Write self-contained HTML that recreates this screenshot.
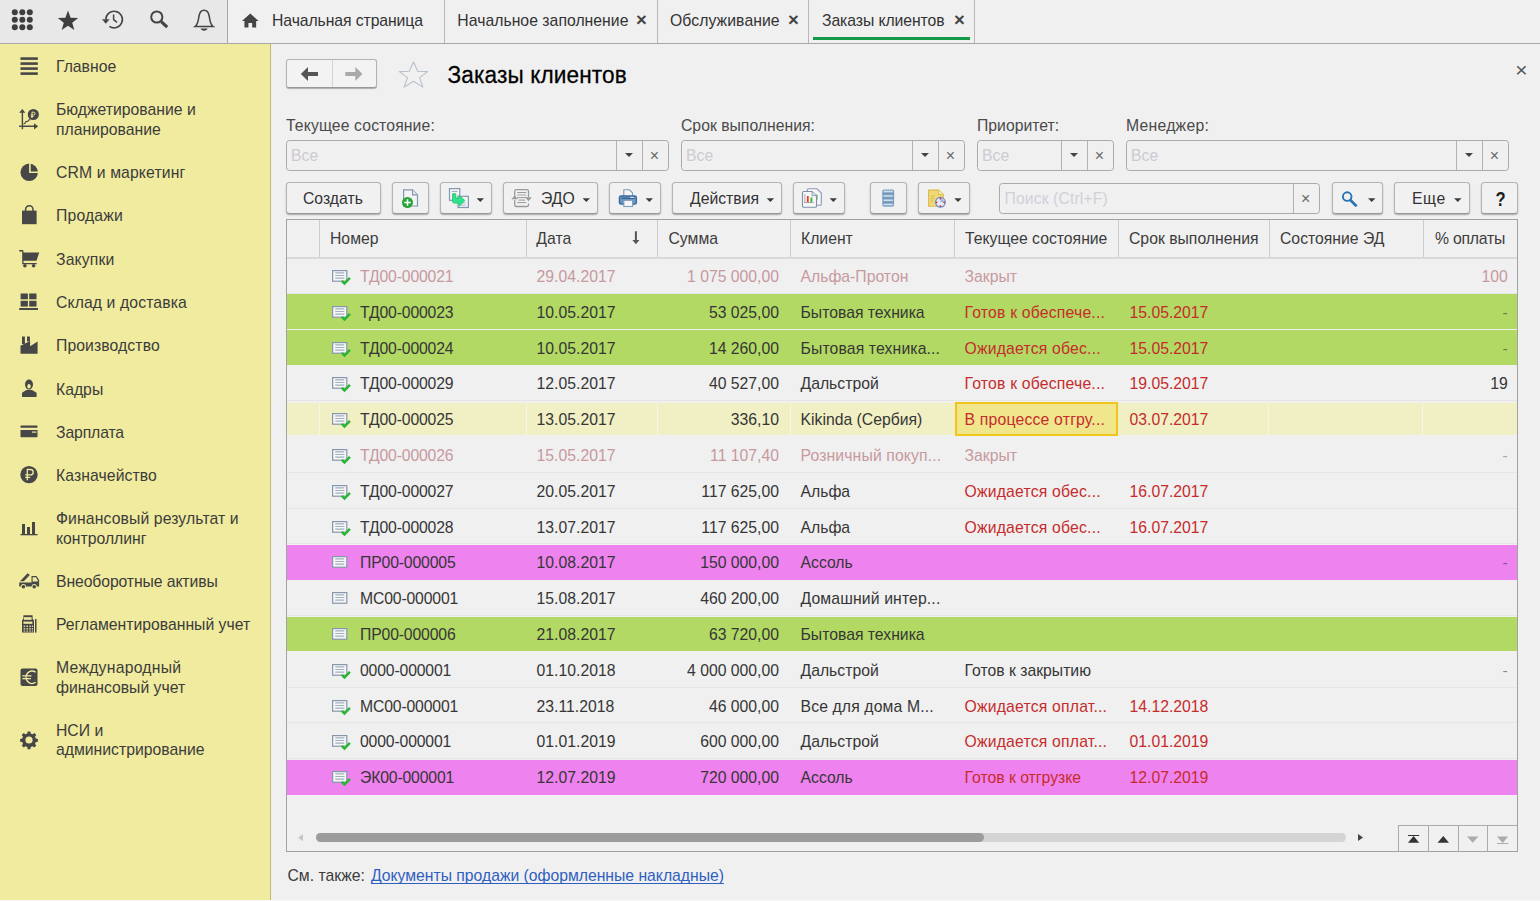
<!DOCTYPE html>
<html lang="ru"><head><meta charset="utf-8"><title>Заказы клиентов</title>
<style>
*{box-sizing:border-box;margin:0;padding:0}
html,body{width:1540px;height:901px;overflow:hidden;background:#f0f0f0}
body{font-family:"Liberation Sans",sans-serif;font-size:15.75px;color:#333;position:relative}
.abs{position:absolute}
svg{position:absolute;overflow:visible}
#top{position:absolute;left:0;top:0;width:1540px;height:44px;background:#f0f0f0;border-bottom:1px solid #a8a8a8}
#tools{position:absolute;left:0;top:0;width:228px;height:43px;background:#e8e8e8;border-right:1px solid #a6a6a6}
.tab{position:absolute;top:0;height:43px;border-right:1px solid #b8b8b8;line-height:41px;white-space:nowrap;color:#333}
.tab span{position:absolute;top:0;letter-spacing:-.08px}
.tab .x{font-size:18.500px;font-weight:bold;color:#444;line-height:39px;letter-spacing:0}
#side{position:absolute;left:0;top:44px;width:271px;height:856px;background:#f0eb9e;border-right:1px solid #c2b970}
#side svg{left:0;top:0}
.si{position:absolute;left:56px;line-height:20px;color:#3c3c3c;white-space:nowrap}
#bottom{position:absolute;left:0;top:900px;width:1540px;height:1px;background:rgba(255,255,255,.55);z-index:9}
.lbl{position:absolute;top:116px;line-height:20px;color:#4a4a4a;white-space:nowrap}
.inp{position:absolute;top:140px;height:31px;border:1px solid #aaa;border-radius:3.500px;background:#f0f0f0;color:#cdcad2;line-height:29px;padding-left:4px;white-space:nowrap}
.inp i{position:absolute;top:0;bottom:0;width:1px;background:#b2b2b2}
.inp u{position:absolute;top:0;text-decoration:none;color:#6a6a6a;font-size:16px;line-height:30px}
.inp b{position:absolute;top:12px;width:0;height:0;border:4px solid transparent;border-top:4px solid #444;border-bottom:0}
.btn{position:absolute;top:182px;height:32px;border:1px solid #b4b4b4;border-bottom-color:#9a9a9a;border-radius:3.500px;background:#f1f1f1;box-shadow:0 1px 1.500px rgba(0,0,0,.3);line-height:29px;color:#333;white-space:nowrap}
.btn span{position:absolute;top:0;line-height:31px}
.btn b{position:absolute;top:14px;width:0;height:0;border:4px solid transparent;border-top:4px solid #444;border-bottom:0}
#tbl{position:absolute;left:286px;top:219px;width:1232px;height:633px;border:1px solid #a2a2a2;background:#f0f0f0}
.hd{position:absolute;top:221px;height:37px;line-height:36px;color:#3c3c3c;white-space:nowrap}
.vs{position:absolute;top:220px;width:1px;height:37px;background:#cdcdcd}
.row{position:absolute;left:287px;width:1230px;white-space:nowrap;color:#363636;border-bottom:1px solid #e6e6e6}
.row p{position:absolute;left:0;width:1230px;height:20px;line-height:20px}
.row span{position:absolute;top:0}
.row.g{background:#b1d963;border-bottom:0}
.row.p{background:#ee82ee;border-bottom:0}
.row.sel{border-bottom:0}
.row.sel em{position:absolute;left:0;width:1230px;top:2px;height:32px;background:#f0f0c4}
.row.closed{color:#c7999f}
.row.closed .c5{color:#c7999f}
.di{left:44px}
.c1{left:73px;letter-spacing:-.15px}.c2{left:249.600px}.c3{right:738px}.c4{left:513.500px}
.c5{left:677.500px;color:#c62c2c}.c5.e{letter-spacing:.2px}.c4.e{letter-spacing:.13px}.c5.k{color:#363636}
.c6{left:842.500px;color:#c62c2c}
.c8{right:9.300px}.c8.dash{color:rgba(50,50,50,.55)}
.row.closed .c8.dash{color:#b8a0a4}
.cs{position:absolute;top:2px;height:32px;width:1px;background:#f6f6e4}
.cell{position:absolute;left:668px;top:1px;height:34px;width:163px;background:#f0e68c;border:2px solid #f0c61e}

</style></head><body>
<div id="top">
 <div id="tools">
  <svg width="227" height="43" viewBox="0 0 227 43" style="left:0;top:0">
   <g fill="#3e3e3e">
    <circle cx="14.8" cy="12.2" r="3"/><circle cx="22.3" cy="12.2" r="3"/><circle cx="29.8" cy="12.2" r="3"/>
    <circle cx="14.8" cy="19.7" r="3"/><circle cx="22.3" cy="19.7" r="3"/><circle cx="29.8" cy="19.7" r="3"/>
    <circle cx="14.8" cy="27.2" r="3"/><circle cx="22.3" cy="27.2" r="3"/><circle cx="29.8" cy="27.2" r="3"/>
    <path d="M68 10.6l2.6 7.1 7.6.3-6 4.7 2.1 7.3-6.3-4.2-6.3 4.2 2.1-7.3-6-4.7 7.6-.3z"/>
   </g>
   <g fill="none" stroke="#444" stroke-width="1.6">
    <path d="M105.8 19.6a8.3 8.3 0 1 1 3.6 6.8"/>
    <path d="M113.6 14.4v5.3l3.4 2.6" stroke-width="1.5"/>
   </g>
   <path d="M102 19.2h7.6l-3.8 4.6z" fill="#444"/>
   <circle cx="156.8" cy="17" r="5.6" fill="none" stroke="#444" stroke-width="2"/>
   <path d="M161.2 21.6l6 5.6" stroke="#444" stroke-width="3.2" fill="none"/>
   <path d="M195 26.6h18.2c-3.4-2.6-3.2-6.200-4-10.600-.6-3.400-2.200-5.800-5.100-5.800s-4.500 2.400-5.100 5.800c-.8 4.400-.6 8-4 10.600z" fill="none" stroke="#444" stroke-width="1.5"/>
   <path d="M200.600 28.600h7c-.4 1.400-1.800 2.100-3.500 2.100s-3.100-.7-3.500-2.100z" fill="#444"/>
  </svg>
 </div>
 <div class="tab" style="left:228px;width:217px">
  <svg width="18.600" height="15.200" viewBox="0 0 20 16" style="left:13.400px;top:12.600px"><path d="M10 0.500l9 8h-2.700v7h-4.300v-5h-4v5h-4.300v-7h-2.700z" fill="#444"/></svg>
  <span style="left:44px">Начальная страница</span></div>
 <div class="tab" style="left:445px;width:213px"><span style="left:12.300px;letter-spacing:.03px">Начальное заполнение</span><span class="x" style="left:191px">×</span></div>
 <div class="tab" style="left:658px;width:151px"><span style="left:12px;letter-spacing:.08px">Обслуживание</span><span class="x" style="left:130px">×</span></div>
 <div class="tab" style="left:809px;width:166px"><span style="left:13px">Заказы клиентов</span><span class="x" style="left:145px">×</span><div class="abs" style="left:4px;top:37px;width:157px;height:3px;background:#149a46"></div></div>
</div>

<div id="side">
 <svg width="60" height="857" viewBox="0 44 60 857">
  <g fill="#474747" stroke="none">
   <!-- hamburger -->
   <rect x="20.500" y="57.300" width="17.300" height="2.600"/><rect x="20.500" y="62.300" width="17.300" height="2.600"/><rect x="20.500" y="67.300" width="17.300" height="2.600"/><rect x="20.500" y="72.300" width="17.300" height="2.600"/>
   <!-- budget -->
   <path d="M21.700 112v15h12.800v-1.400h-11.400v-13.600z"/><path d="M19.200 112.800l3.100-3.900 3.100 3.900z"/><path d="M34 123.200l4.200 3.100-4.200 3.100z"/><path d="M21.700 127h-2.600v-1.400h2.600zM21.700 127v2.200h1.400v-2.200z"/>
   <circle cx="33.300" cy="114.500" r="5.600"/>
   <path d="M23.600 124l2.200-1.500v-.9l2.300-.5.600-1.200 1.700-.3" fill="none" stroke="#474747" stroke-width="1.100"/>
   <!-- pie -->
   <circle cx="29.200" cy="172.300" r="8.700"/>
   <!-- bag -->
   <rect x="22" y="210.600" width="14.600" height="13.600"/>
   <path d="M25.600 213v-3.600a3.700 3.700 0 0 1 7.400 0v3.600" fill="none" stroke="#474747" stroke-width="1.500"/>
   <!-- cart -->
   <path d="M19.200 250h3.900l.5 2.400h15.600l-2.700 8.300h-13v2.200h13.200v1.300h-14.500v-12.800h-3z"/>
   <circle cx="24.900" cy="265.800" r="1.800"/><circle cx="33.600" cy="265.800" r="1.800"/>
   <!-- warehouse -->
   <rect x="20.600" y="293.500" width="7.300" height="5.800"/><rect x="29.200" y="293.500" width="7.300" height="5.800"/><rect x="20.600" y="300.800" width="7.300" height="5.800"/><rect x="29.200" y="300.800" width="7.300" height="5.800"/><rect x="19.200" y="308" width="18.800" height="2"/>
   <!-- factory -->
   <path d="M20.500 353.700v-8l9.600-4.800v5.400l7.500-4.800v12.200z"/><rect x="22" y="336.500" width="2.900" height="7.500"/><rect x="27" y="336.500" width="2.900" height="5"/>
   <!-- person -->
   <path d="M22 397v-4.300l4.300-2.700h5.700l4.600 2.700v4.300z"/>
   <path d="M25 384.200a4 4.600 0 0 1 8 0c0 2.800-1.800 5.400-4 5.400s-4-2.600-4-5.400z"/>
   <!-- card -->
   <rect x="20.500" y="425.500" width="17" height="2.200" rx=".6"/><path d="M20.500 430h17v6.600a.6.600 0 0 1-.6.600h-15.800a.6.600 0 0 1-.6-.6z"/>
   <!-- ruble circle -->
   <circle cx="29" cy="474.600" r="8.700"/>
   <!-- bars -->
   <rect x="22" y="524" width="3" height="10"/><rect x="27" y="527" width="3" height="7"/><rect x="32" y="522" width="3" height="12"/><rect x="20.500" y="534" width="17" height="1.300"/>
   <!-- truck -->
   <path d="M19.200 582.600h12.300v-6.600h5l2.600 4v6.600h-2.300a2.600 2.600 0 0 0-5.200 0h-5.600a2.600 2.600 0 0 0-5.200 0h-1.600z"/>
   <path d="M20 581.300l7.600-8.100 2.200 1.700-6 6.400z"/>
   <circle cx="23.400" cy="586.700" r="1.800"/><circle cx="34.200" cy="586.700" r="1.800"/>
   <!-- calc -->
   <path d="M22 632.600v-12l1.400-1.800v-3.600h9.200v3.600l1.400 1.800v12z"/><rect x="35" y="619" width="1.500" height="13.600"/>
   <!-- euro -->
   <rect x="20.500" y="668.600" width="17" height="17.400" rx="2"/>
   <!-- gear -->
   <path id="gear" d="M27.600 731.400h2.800l.3 2.100 1.900.8 1.700-1.300 2 2-1.300 1.700.8 1.900 2.100.3v2.800l-2.100.3-.8 1.900 1.300 1.700-2 2-1.700-1.300-1.900.8-.3 2.100h-2.800l-.3-2.100-1.900-.8-1.700 1.300-2-2 1.300-1.700-.8-1.900-2.100-.3v-2.800l2.100-.3.800-1.900-1.300-1.700 2-2 1.700 1.300 1.900-.8z"/>
  </g>
  <g fill="#f0eb9e">
   <rect x="32" y="431.500" width="4.500" height="1.200"/>
   <circle cx="29" cy="740" r="3.600"/>
   <rect x="24" y="617.200" width="7.600" height="2.600"/><rect x="23.400" y="621.600" width="9" height="2.200"/>
   <rect x="23.600" y="625.600" width="1.600" height="1.300"/><rect x="26.400" y="625.600" width="1.600" height="1.300"/><rect x="29.200" y="625.600" width="1.600" height="1.300"/><rect x="31.800" y="625.600" width="1.200" height="1.300"/>
   <rect x="23.600" y="628.200" width="1.600" height="1.300"/><rect x="26.400" y="628.200" width="1.600" height="1.300"/><rect x="29.200" y="628.200" width="1.600" height="1.300"/><rect x="31.800" y="628.200" width="1.200" height="1.300"/>
   <rect x="23.600" y="630.600" width="1.600" height="1"/><rect x="26.400" y="630.600" width="1.600" height="1"/><rect x="29.200" y="630.600" width="1.600" height="1"/><rect x="31.800" y="630.600" width="1.200" height="1"/>
   <path d="M32.600 577.200h3.300l1.800 3v1.400h-5.100z"/>
   <ellipse cx="29" cy="386.300" rx="1.700" ry="2.200"/>
  </g>
  <g fill="none" stroke="#f0eb9e">
   <path d="M29.900 163v9.200h9" stroke-width="1.600"/>
   <path d="M27.300 480.300v-10.800h3.200a2.500 2.500 0 0 1 0 5.400h-5.300M25.200 477.400h5" stroke-width="1.300"/>
   <path d="M32 112.200v5.800M32 112.200h1.600a1.400 1.400 0 0 1 0 2.800h-2.800M30.800 116.500h2.600" stroke-width="1"/>
   <path d="M35.600 672.300a5.900 6.300 0 1 0 0 10M22.300 675.900h9.200M22.300 678.600h8.600" stroke-width="1.400"/>
  </g>
 </svg>
 <div class="si" style="top:12.80px;line-height:20px">Главное</div>
 <div class="si" style="top:56.05px;line-height:19.5px">Бюджетирование и<br>планирование</div>
 <div class="si" style="top:118.80px;line-height:20px;letter-spacing:0.12px">CRM и маркетинг</div>
 <div class="si" style="top:161.80px;line-height:20px;letter-spacing:0.15px">Продажи</div>
 <div class="si" style="top:205.80px;line-height:20px;letter-spacing:0.15px">Закупки</div>
 <div class="si" style="top:248.80px;line-height:20px;letter-spacing:0.11px">Склад и доставка</div>
 <div class="si" style="top:291.80px;line-height:20px;letter-spacing:0.09px">Производство</div>
 <div class="si" style="top:335.80px;line-height:20px">Кадры</div>
 <div class="si" style="top:378.80px;line-height:20px;letter-spacing:-0.12px">Зарплата</div>
 <div class="si" style="top:421.80px;line-height:20px;letter-spacing:0.09px">Казначейство</div>
 <div class="si" style="top:464.90px;line-height:19.8px"><span style="letter-spacing:.11px">Финансовый результат и</span><br>контроллинг</div>
 <div class="si" style="top:527.80px;line-height:20px;letter-spacing:-0.1px">Внеоборотные активы</div>
 <div class="si" style="top:570.80px;line-height:20px">Регламентированный учет</div>
 <div class="si" style="top:613.95px;line-height:19.7px"><span style="letter-spacing:.25px">Международный</span><br>финансовый учет</div>
 <div class="si" style="top:677.20px;line-height:19.2px">НСИ и<br>администрирование</div>
</div>
<div id="bottom"></div>

<!-- nav -->
<div class="abs" style="left:286px;top:59px;width:91px;height:29px;border:1px solid #b4b4b4;border-bottom-color:#9a9a9a;border-radius:3px;background:#f3f3f3;box-shadow:0 1px 1px rgba(0,0,0,.28)">
 <div class="abs" style="left:45px;top:0;width:1px;height:27px;background:#d4d4d4"></div>
 <svg width="89" height="27" viewBox="0 0 89 27" style="left:0;top:0">
  <path d="M13.800 14l7.200-7v5h10v4h-10v5z" fill="#555"/>
  <path d="M75.500 14l-7.200-7v5h-10v4h10v5z" fill="#aaa"/>
 </svg>
</div>
<svg width="34" height="30" viewBox="397 59 34 30" style="left:397px;top:59px"><path d="M413.500 62l4.200 9.300 10 .3-8.200 6 3.400 9.500-9.400-5.900-9.400 5.900 3.400-9.500-8.200-6 10-.3z" fill="#f1f1f1" stroke="#b8c0ca" stroke-width="1.100" stroke-linejoin="round"/></svg>
<div class="abs" id="title" style="left:447.500px;top:60.500px;letter-spacing:.13px;font-size:22.600px;line-height:30px;color:#000;white-space:nowrap;transform:scaleY(1.085);transform-origin:0 23.500px;-webkit-text-stroke:.25px #000">Заказы клиентов</div>
<div class="abs" style="left:1515.200px;top:59px;font-size:21px;line-height:22px;color:#555">×</div>

<!-- filters -->
<div class="lbl" style="left:286px;letter-spacing:.12px">Текущее состояние:</div>
<div class="lbl" style="left:681px">Срок выполнения:</div>
<div class="lbl" style="left:977px">Приоритет:</div>
<div class="lbl" style="left:1126px;letter-spacing:.25px">Менеджер:</div>
<div class="inp" style="left:286px;width:383px">Все<i style="left:329px"></i><i style="left:355px"></i><b style="left:338px"></b><u style="left:362.800px">×</u></div>
<div class="inp" style="left:681px;width:284px">Все<i style="left:230px"></i><i style="left:256px"></i><b style="left:239px"></b><u style="left:263.800px">×</u></div>
<div class="inp" style="left:977px;width:137px">Все<i style="left:83px"></i><i style="left:109px"></i><b style="left:92px"></b><u style="left:116.800px">×</u></div>
<div class="inp" style="left:1126px;width:383px">Все<i style="left:329px"></i><i style="left:355px"></i><b style="left:338px"></b><u style="left:362.800px">×</u></div>

<!-- toolbar -->
<div class="btn" style="left:286px;width:95px"><span style="left:16px">Создать</span></div>
<div class="btn" style="left:392px;width:37px"></div>
<div class="btn" style="left:440px;width:52px"></div>
<div class="btn" style="left:503px;width:95px"><span style="left:37px">ЭДО</span></div>
<div class="btn" style="left:609px;width:52px"></div>
<div class="btn" style="left:672px;width:110px"><span style="left:17px">Действия</span></div>
<div class="btn" style="left:793px;width:52px"></div>
<div class="btn" style="left:870px;width:37px"></div>
<div class="btn" style="left:918px;width:52px"></div>
<div class="inp" style="left:999px;top:183px;width:321px;height:31px;line-height:29px;color:#d2cfd8;letter-spacing:.1px;padding-left:4.500px">Поиск (Ctrl+F)<i style="left:293px"></i><u style="left:301px;line-height:30px">×</u></div>
<div class="btn" style="left:1332px;width:51px"></div>
<div class="btn" style="left:1394px;width:76px"><span style="left:17px;letter-spacing:.6px">Еще</span></div>
<div class="btn" style="left:1481px;width:37px"><span id="q" style="left:12.500px;top:1.500px;font-weight:bold;font-size:18px;color:#1c1c1c;line-height:31px;transform:scale(.92,1.1);transform-origin:50% 21px">?</span></div>
<svg width="1240" height="45" viewBox="286 176 1240 45" style="left:286px;top:176px">
 <g fill="#3c3c3c"><path d="M476.6 198.200h7.400l-3.700 3.900z"/><path d="M582.5999999999999 198.200h7.400l-3.700 3.900z"/><path d="M645.5999999999999 198.200h7.400l-3.700 3.900z"/><path d="M766.6999999999999 198.200h7.400l-3.700 3.900z"/><path d="M829.5999999999999 198.200h7.400l-3.700 3.900z"/><path d="M954.3 198.200h7.400l-3.700 3.900z"/><path d="M1368.0 198.200h7.400l-3.700 3.900z"/><path d="M1454.1 198.200h7.400l-3.700 3.900z"/></g>
 <!-- new doc -->
 <path d="M403.600 189.900h8.900l5 5v11.100h-13.900z" fill="#f4f4f4" stroke="#8496b0" stroke-width="1.200"/>
 <path d="M412.500 189.900v5h5" fill="#e4e8ee" stroke="#8496b0" stroke-width="1.100"/>
 <circle cx="407.500" cy="202.500" r="5.500" fill="#27a338"/>
 <path d="M407.500 199.200v6.600M404.200 202.500h6.600" stroke="#fff" stroke-width="1.500"/>
 <!-- copy arrow -->
 <rect x="449.500" y="188.600" width="10.300" height="11.700" fill="#f4f4f4" stroke="#8496b0" stroke-width="1.200"/>
 <path d="M451.800 191.500h5.600" stroke="#9fb0c4" stroke-width="1"/>
 <rect x="458" y="196.300" width="10.400" height="11.200" fill="#f4f4f4" stroke="#8496b0" stroke-width="1.200"/>
 <path d="M460.500 203h5.600M460.500 205.300h5.600" stroke="#b4c0d0" stroke-width="1"/>
 <path d="M452.600 193.800h3.200v4.300h3.400v-2.800l5.600 5.200-5.600 5.800v-3.200h-4.600c-1.400 0-2-.6-2-2z" fill="#2ce58c" stroke="#22c46c" stroke-width=".9" stroke-linejoin="round"/>
 <!-- EDO -->
 <g fill="none" stroke="#9a9a9a" stroke-width="1.300">
  <path d="M514.700 198.500v-7.300a1.600 1.600 0 0 1 1.600-1.600h10.600a1.600 1.600 0 0 1 1.600 1.600v5.800M528.500 203.500v1.400a1.600 1.600 0 0 1-1.600 1.600h-10.600a1.600 1.600 0 0 1-1.600-1.600v-5"/>
  <path d="M517.200 192.500h9M517.200 197.600h9M517.200 202.600h9" stroke-width="1"/>
  <path d="M517.200 195h9M518.500 200.100h6.500" stroke="#bdbdbd" stroke-width="1.600"/>
 </g>
 <path d="M511.400 199.300l3.300-3.900 3.300 3.900zM525.200 197.300l3.300 3.900 3.300-3.900z" fill="#9a9a9a"/>
 <!-- printer -->
 <path d="M623.800 196.500v-6.700h5.700l3 3v3.700" fill="#f6f6f6" stroke="#7e9cbc" stroke-width="1.100"/>
 <rect x="619.400" y="196" width="17" height="8.200" rx="1.700" fill="#6a94be" stroke="#366a9c" stroke-width="1.300"/>
 <path d="M621.500 198.300h13" stroke="#2f5f90" stroke-width="1.200"/>
 <path d="M630.200 197.400h3.600" stroke="#e8f0f8" stroke-width="1"/>
 <rect x="623.800" y="200.300" width="8.800" height="6.200" fill="#f6f6f6" stroke="#7e9cbc" stroke-width="1.100"/>
 <!-- reports -->
 <path d="M808.600 188.800h8.300l4.400 4.200v11a1.300 1.300 0 0 1-1.300 1.300h-11.400a1.300 1.300 0 0 1-1.300-1.300v-13.900a1.300 1.300 0 0 1 1.300-1.300z" fill="#f6f6f6" stroke="#8a9cb4" stroke-width="1.100"/>
 <rect x="815.600" y="194.500" width="1.900" height="5.200" fill="#4cb43c"/>
 <path d="M803.800 191.500h8.300l4.400 4.200v10.200a1.300 1.300 0 0 1-1.300 1.300h-11.400a1.300 1.300 0 0 1-1.300-1.300v-13.100a1.300 1.300 0 0 1 1.300-1.300z" fill="#f8f8f8" stroke="#7d90aa" stroke-width="1.100"/>
 <path d="M812.100 191.500v4.200h4.400" fill="#dfe5ec" stroke="#8a9cb4" stroke-width="1"/>
 <rect x="804.300" y="194" width="1.200" height="8.200" fill="#b8b8b8"/>
 <rect x="806.900" y="196" width="1.800" height="6.200" fill="#f03a20"/>
 <rect x="810.400" y="197.400" width="2" height="4.800" fill="#4cb43c"/>
 <path d="M804 202.600h9.600" stroke="#999" stroke-width=".9"/>
 <!-- list -->
 <rect x="882.300" y="189.600" width="11.800" height="17.200" rx="1.700" fill="#7fa1c0"/>
 <path d="M882.300 193.800h11.800M882.300 198.100h11.800M882.300 202.400h11.800" stroke="#7096b8" stroke-width="1"/>
 <path d="M883.600 191.600h9.200M883.600 195.900h9.200M883.600 200.200h9.200M883.600 204.500h9.200" stroke="#cfe1ef" stroke-width="1.500"/>
 <!-- doc clock -->
 <path d="M928.600 190.100h10l4.700 4.500v11.700h-14.700z" fill="#f0d878" stroke="#dcbc4c" stroke-width="1.100"/>
 <path d="M938.600 190.100v4.500h4.700" fill="#f8ecb4" stroke="#dcbc4c" stroke-width="1"/>
 <path d="M930.800 196.200h4M930.800 198.600h3.400M930.800 201h2.600" stroke="#d8b84c" stroke-width="1"/>
 <circle cx="940.400" cy="202.300" r="4.900" fill="#e6edf8" stroke="#6a96d4" stroke-width="1.300"/>
 <path d="M940.400 202.300v-3.600a3.600 3.600 0 0 1 3.600 3.600z" fill="#9cb8e4"/>
 <g fill="#f01818"><circle cx="940.400" cy="198.500" r=".9"/><circle cx="940.400" cy="206.100" r=".9"/><circle cx="936.600" cy="202.300" r=".9"/><circle cx="944.200" cy="202.300" r=".9"/></g>
 <!-- search -->
 <circle cx="1347.200" cy="196.600" r="4.300" fill="none" stroke="#2b74b4" stroke-width="1.900"/>
 <path d="M1350.300 200l6.300 6.200" stroke="#2b74b4" stroke-width="2.700"/>
</svg>

<!-- table -->
<div id="tbl"></div>
<div class="abs" style="left:287px;top:257px;width:1230px;height:2px;background:#d9d9d9"></div>
<i class="vs" style="left:319px"></i><i class="vs" style="left:526px"></i><i class="vs" style="left:657px"></i><i class="vs" style="left:790px"></i><i class="vs" style="left:954px"></i><i class="vs" style="left:1118px"></i><i class="vs" style="left:1269px"></i><i class="vs" style="left:1423px"></i>
<div class="hd" style="left:330px">Номер</div>
<div class="hd" style="left:536.300px">Дата</div>
<svg width="10" height="16" viewBox="631 230 10 16" style="left:631px;top:230px"><path d="M634.900 231.300h2v8.700h2.500l-3.500 4.200-3.500-4.200h2.500z" fill="#555"/></svg>
<div class="hd" style="left:668.500px">Сумма</div>
<div class="hd" style="left:801px">Клиент</div>
<div class="hd" style="left:965px">Текущее состояние</div>
<div class="hd" style="left:1129px">Срок выполнения</div>
<div class="hd" style="left:1280px">Состояние ЭД</div>
<div class="hd" style="left:1435px;letter-spacing:-.2px">% оплаты</div>

<!-- scrollbar -->
<svg width="1232" height="30" viewBox="286 822 1232 30" style="left:286px;top:822px">
 <path d="M298 837.700l5-3.600v7.200z" fill="#c6c6c6"/>
 <rect x="316" y="833" width="1030" height="9" rx="4.500" fill="#d4d4d4"/>
 <rect x="316" y="833" width="668" height="9" rx="4.500" fill="#9c9c9c"/>
 <path d="M1358 834v7l5-3.500z" fill="#444"/>
</svg>
<div class="abs" style="left:1398px;top:825px;width:119px;height:26px;border-left:1px solid #ababab;border-top:1px solid #ababab;background:#f0f0f0">
 <i class="abs" style="left:29px;top:0;width:1px;height:25px;background:#ababab"></i><i class="abs" style="left:59px;top:0;width:1px;height:25px;background:#ababab"></i><i class="abs" style="left:88px;top:0;width:1px;height:25px;background:#ababab"></i>
 <svg width="118" height="26" viewBox="1399 826 118 26" style="left:0;top:0">
  <path d="M1408 835.100h11.200v1h-11.200zM1413.600 836.100l5.600 6.600h-11.200z" fill="#333"/>
  <path d="M1443.300 836.100l5.700 6.600h-11.400z" fill="#333"/>
  <path d="M1472.700 842.700l5.700-6.300h-11.400z" fill="#ababab"/>
  <path d="M1497 843.100h11.200v1h-11.200zM1502.600 843.100l5.600-6.700h-11.200z" fill="#ababab"/>
 </svg>
</div>
<div class="abs" style="left:287.500px;top:865.600px;line-height:20px;white-space:nowrap;color:#3c3c3c">См. также:</div>
<div class="abs" style="left:371px;top:865.600px;line-height:20px;white-space:nowrap;color:#2f5fc0;text-decoration:underline;text-underline-offset:2px;text-decoration-skip-ink:none;text-decoration-thickness:1.200px;letter-spacing:-.02px">Документы продажи (оформленные накладные)</div>

<div class="row closed" style="top:258px;height:36px"><svg class="di" style="top:10.0px" viewBox="0 0 20 18" width="20" height="18"><rect x="1.600" y="2.600" width="14.200" height="10.600" fill="#f6f6f6" stroke="#8597ad" stroke-width="1.200"/><path d="M4.300 4.900h9M4.300 7.500h9M4.300 10.100h9" stroke="#a3b0be" stroke-width="1.100"/><path d="M10.800 12.800l2.700 2.700L18.900 9.900" fill="none" stroke="#2bb534" stroke-width="2.500"/></svg><p style="top:8.90px"><span class="c1">ТД00-000021</span><span class="c2">29.04.2017</span><span class="c3">1 075 000,00</span><span class="c4">Альфа-Протон</span><span class="c5">Закрыт</span><span class="c8">100</span></p></div>
<div class="row g" style="top:294px;height:35px"><svg class="di" style="top:9.8px" viewBox="0 0 20 18" width="20" height="18"><rect x="1.600" y="2.600" width="14.200" height="10.600" fill="#f6f6f6" stroke="#8597ad" stroke-width="1.200"/><path d="M4.300 4.900h9M4.300 7.500h9M4.300 10.100h9" stroke="#a3b0be" stroke-width="1.100"/><path d="M10.800 12.800l2.700 2.700L18.900 9.900" fill="none" stroke="#2bb534" stroke-width="2.500"/></svg><p style="top:8.70px"><span class="c1">ТД00-000023</span><span class="c2">10.05.2017</span><span class="c3">53 025,00</span><span class="c4">Бытовая техника</span><span class="c5 e">Готов к обеспече...</span><span class="c6">15.05.2017</span><span class="c8 dash">-</span></p></div>
<div class="row g" style="top:330px;height:35px"><svg class="di" style="top:9.6px" viewBox="0 0 20 18" width="20" height="18"><rect x="1.600" y="2.600" width="14.200" height="10.600" fill="#f6f6f6" stroke="#8597ad" stroke-width="1.200"/><path d="M4.300 4.900h9M4.300 7.500h9M4.300 10.100h9" stroke="#a3b0be" stroke-width="1.100"/><path d="M10.800 12.800l2.700 2.700L18.900 9.900" fill="none" stroke="#2bb534" stroke-width="2.500"/></svg><p style="top:8.50px"><span class="c1">ТД00-000024</span><span class="c2">10.05.2017</span><span class="c3">14 260,00</span><span class="c4 e">Бытовая техника...</span><span class="c5 e">Ожидается обес...</span><span class="c6">15.05.2017</span><span class="c8 dash">-</span></p></div>
<div class="row" style="top:365px;height:36px"><svg class="di" style="top:10.4px" viewBox="0 0 20 18" width="20" height="18"><rect x="1.600" y="2.600" width="14.200" height="10.600" fill="#f6f6f6" stroke="#8597ad" stroke-width="1.200"/><path d="M4.300 4.900h9M4.300 7.500h9M4.300 10.100h9" stroke="#a3b0be" stroke-width="1.100"/><path d="M10.800 12.800l2.700 2.700L18.900 9.900" fill="none" stroke="#2bb534" stroke-width="2.500"/></svg><p style="top:9.30px"><span class="c1">ТД00-000029</span><span class="c2">12.05.2017</span><span class="c3">40 527,00</span><span class="c4">Дальстрой</span><span class="c5 e">Готов к обеспече...</span><span class="c6">19.05.2017</span><span class="c8">19</span></p></div>
<div class="row sel" style="top:401px;height:36px"><em></em><i class="cs" style="left:32px"></i><i class="cs" style="left:239px"></i><i class="cs" style="left:370px"></i><i class="cs" style="left:503px"></i><i class="cs" style="left:981px"></i><i class="cs" style="left:1135px"></i><b class="cell"></b><svg class="di" style="top:10.2px" viewBox="0 0 20 18" width="20" height="18"><rect x="1.600" y="2.600" width="14.200" height="10.600" fill="#f6f6f6" stroke="#8597ad" stroke-width="1.200"/><path d="M4.300 4.900h9M4.300 7.500h9M4.300 10.100h9" stroke="#a3b0be" stroke-width="1.100"/><path d="M10.800 12.800l2.700 2.700L18.900 9.900" fill="none" stroke="#2bb534" stroke-width="2.500"/></svg><p style="top:9.10px"><span class="c1">ТД00-000025</span><span class="c2">13.05.2017</span><span class="c3">336,10</span><span class="c4">Kikinda (Сербия)</span><span class="c5 e">В процессе отгру...</span><span class="c6">03.07.2017</span></p></div>
<div class="row closed" style="top:437px;height:36px"><svg class="di" style="top:10.0px" viewBox="0 0 20 18" width="20" height="18"><rect x="1.600" y="2.600" width="14.200" height="10.600" fill="#f6f6f6" stroke="#8597ad" stroke-width="1.200"/><path d="M4.300 4.900h9M4.300 7.500h9M4.300 10.100h9" stroke="#a3b0be" stroke-width="1.100"/><path d="M10.800 12.800l2.700 2.700L18.900 9.900" fill="none" stroke="#2bb534" stroke-width="2.500"/></svg><p style="top:8.90px"><span class="c1">ТД00-000026</span><span class="c2">15.05.2017</span><span class="c3">11 107,40</span><span class="c4 e">Розничный покуп...</span><span class="c5">Закрыт</span><span class="c8 dash">-</span></p></div>
<div class="row" style="top:473px;height:36px"><svg class="di" style="top:9.8px" viewBox="0 0 20 18" width="20" height="18"><rect x="1.600" y="2.600" width="14.200" height="10.600" fill="#f6f6f6" stroke="#8597ad" stroke-width="1.200"/><path d="M4.300 4.900h9M4.300 7.500h9M4.300 10.100h9" stroke="#a3b0be" stroke-width="1.100"/><path d="M10.800 12.800l2.700 2.700L18.900 9.900" fill="none" stroke="#2bb534" stroke-width="2.500"/></svg><p style="top:8.70px"><span class="c1">ТД00-000027</span><span class="c2">20.05.2017</span><span class="c3">117 625,00</span><span class="c4">Альфа</span><span class="c5 e">Ожидается обес...</span><span class="c6">16.07.2017</span></p></div>
<div class="row" style="top:509px;height:35px"><svg class="di" style="top:9.6px" viewBox="0 0 20 18" width="20" height="18"><rect x="1.600" y="2.600" width="14.200" height="10.600" fill="#f6f6f6" stroke="#8597ad" stroke-width="1.200"/><path d="M4.300 4.900h9M4.300 7.500h9M4.300 10.100h9" stroke="#a3b0be" stroke-width="1.100"/><path d="M10.800 12.800l2.700 2.700L18.900 9.900" fill="none" stroke="#2bb534" stroke-width="2.500"/></svg><p style="top:8.50px"><span class="c1">ТД00-000028</span><span class="c2">13.07.2017</span><span class="c3">117 625,00</span><span class="c4">Альфа</span><span class="c5 e">Ожидается обес...</span><span class="c6">16.07.2017</span></p></div>
<div class="row p" style="top:545px;height:35px"><svg class="di" style="top:9.4px" viewBox="0 0 20 18" width="20" height="18"><rect x="1.600" y="2.600" width="14.200" height="10.600" fill="#f6f6f6" stroke="#8597ad" stroke-width="1.200"/><path d="M4.300 4.900h9M4.300 7.500h9M4.300 10.100h9" stroke="#a3b0be" stroke-width="1.100"/></svg><p style="top:8.30px"><span class="c1">ПР00-000005</span><span class="c2">10.08.2017</span><span class="c3">150 000,00</span><span class="c4">Ассоль</span><span class="c8 dash">-</span></p></div>
<div class="row" style="top:580px;height:36px"><svg class="di" style="top:10.2px" viewBox="0 0 20 18" width="20" height="18"><rect x="1.600" y="2.600" width="14.200" height="10.600" fill="#f6f6f6" stroke="#8597ad" stroke-width="1.200"/><path d="M4.300 4.900h9M4.300 7.500h9M4.300 10.100h9" stroke="#a3b0be" stroke-width="1.100"/></svg><p style="top:9.10px"><span class="c1">МС00-000001</span><span class="c2">15.08.2017</span><span class="c3">460 200,00</span><span class="c4 e">Домашний интер...</span></p></div>
<div class="row g" style="top:617px;height:34px"><svg class="di" style="top:9.0px" viewBox="0 0 20 18" width="20" height="18"><rect x="1.600" y="2.600" width="14.200" height="10.600" fill="#f6f6f6" stroke="#8597ad" stroke-width="1.200"/><path d="M4.300 4.900h9M4.300 7.500h9M4.300 10.100h9" stroke="#a3b0be" stroke-width="1.100"/></svg><p style="top:7.90px"><span class="c1">ПР00-000006</span><span class="c2">21.08.2017</span><span class="c3">63 720,00</span><span class="c4">Бытовая техника</span></p></div>
<div class="row" style="top:652px;height:36px"><svg class="di" style="top:9.8px" viewBox="0 0 20 18" width="20" height="18"><rect x="1.600" y="2.600" width="14.200" height="10.600" fill="#f6f6f6" stroke="#8597ad" stroke-width="1.200"/><path d="M4.300 4.900h9M4.300 7.500h9M4.300 10.100h9" stroke="#a3b0be" stroke-width="1.100"/><path d="M10.800 12.800l2.700 2.700L18.900 9.900" fill="none" stroke="#2bb534" stroke-width="2.500"/></svg><p style="top:8.70px"><span class="c1">0000-000001</span><span class="c2">01.10.2018</span><span class="c3">4 000 000,00</span><span class="c4">Дальстрой</span><span class="c5 k">Готов к закрытию</span><span class="c8 dash">-</span></p></div>
<div class="row" style="top:688px;height:35px"><svg class="di" style="top:9.6px" viewBox="0 0 20 18" width="20" height="18"><rect x="1.600" y="2.600" width="14.200" height="10.600" fill="#f6f6f6" stroke="#8597ad" stroke-width="1.200"/><path d="M4.300 4.900h9M4.300 7.500h9M4.300 10.100h9" stroke="#a3b0be" stroke-width="1.100"/><path d="M10.800 12.800l2.700 2.700L18.900 9.900" fill="none" stroke="#2bb534" stroke-width="2.500"/></svg><p style="top:8.50px"><span class="c1">МС00-000001</span><span class="c2">23.11.2018</span><span class="c3">46 000,00</span><span class="c4 e">Все для дома М...</span><span class="c5 e">Ожидается оплат...</span><span class="c6">14.12.2018</span></p></div>
<div class="row" style="top:723px;height:36px"><svg class="di" style="top:10.4px" viewBox="0 0 20 18" width="20" height="18"><rect x="1.600" y="2.600" width="14.200" height="10.600" fill="#f6f6f6" stroke="#8597ad" stroke-width="1.200"/><path d="M4.300 4.900h9M4.300 7.500h9M4.300 10.100h9" stroke="#a3b0be" stroke-width="1.100"/><path d="M10.800 12.800l2.700 2.700L18.900 9.900" fill="none" stroke="#2bb534" stroke-width="2.500"/></svg><p style="top:9.30px"><span class="c1">0000-000001</span><span class="c2">01.01.2019</span><span class="c3">600 000,00</span><span class="c4">Дальстрой</span><span class="c5 e">Ожидается оплат...</span><span class="c6">01.01.2019</span></p></div>
<div class="row p" style="top:760px;height:35px"><svg class="di" style="top:9.2px" viewBox="0 0 20 18" width="20" height="18"><rect x="1.600" y="2.600" width="14.200" height="10.600" fill="#f6f6f6" stroke="#8597ad" stroke-width="1.200"/><path d="M4.300 4.900h9M4.300 7.500h9M4.300 10.100h9" stroke="#a3b0be" stroke-width="1.100"/><path d="M10.800 12.800l2.700 2.700L18.900 9.900" fill="none" stroke="#2bb534" stroke-width="2.500"/></svg><p style="top:8.10px"><span class="c1">ЭК00-000001</span><span class="c2">12.07.2019</span><span class="c3">720 000,00</span><span class="c4">Ассоль</span><span class="c5">Готов к отгрузке</span><span class="c6">12.07.2019</span></p></div>
</body></html>
